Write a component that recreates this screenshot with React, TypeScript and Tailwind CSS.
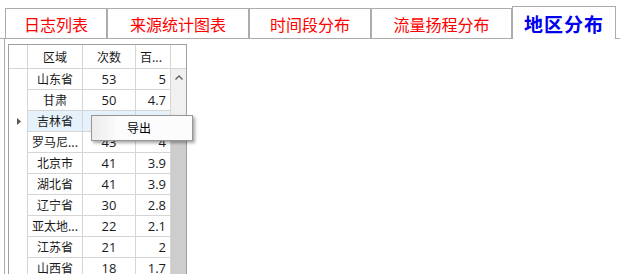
import React from "react"

const tabs = [
  { label: "日志列表", w: "w-[102px]" },
  { label: "来源统计图表", w: "w-[142px]" },
  { label: "时间段分布", w: "w-[122px]" },
  { label: "流量扬程分布", w: "w-[141px]" },
]

const rows = [
  { name: "山东省", count: "53", pct: "5" },
  { name: "甘肃", count: "50", pct: "4.7" },
  { name: "吉林省", count: "47", pct: "4.4", current: true },
  { name: "罗马尼...", count: "43", pct: "4" },
  { name: "北京市", count: "41", pct: "3.9" },
  { name: "湖北省", count: "41", pct: "3.9" },
  { name: "辽宁省", count: "30", pct: "2.8" },
  { name: "亚太地...", count: "22", pct: "2.1" },
  { name: "江苏省", count: "21", pct: "2" },
  { name: "山西省", count: "18", pct: "1.7" },
  { name: "河北省", count: "17", pct: "1.6" },
]

export default function App() {
  return (
    <div className="relative h-[274px] w-[620px] overflow-hidden bg-white font-['Noto_Sans_CJK_SC',sans-serif] text-[#1a1a1a]">
      {/* tab strip */}
      <div className="flex h-[39px] items-end border-b border-[#acacac] pl-[5px]">
        {tabs.map((t) => (
          <div
            key={t.label}
            className={`flex h-[30px] items-center justify-center border border-b-0 border-[#acacac] pt-[1px] text-[16px] leading-none text-[#ff0000] ${t.w}`}
          >
            {t.label}
          </div>
        ))}
        <div className="relative -mb-px flex h-[33px] w-[104px] items-center justify-center border border-b-0 border-[#acacac] bg-white text-[19px] font-bold leading-none tracking-[1px] text-[#0000ee]">
          地区分布
        </div>
      </div>

      {/* tab page */}
      <div className="ml-[4px] h-[235px] border-l border-[#acacac] pl-[3px] pt-[5px]">
        <div className="flex h-[260px] w-[179px] flex-col border border-[#a0a0a0]">
          <div className="flex h-[24px] shrink-0 border-b border-[#d5d5d5] text-[12px] leading-none">
            <div className="w-[19px] border-r border-[#d5d5d5]" />
            <div className="flex w-[55px] items-center justify-center border-r border-[#d5d5d5]">区域</div>
            <div className="flex w-[53px] items-center justify-center border-r border-[#d5d5d5]">次数</div>
            <div className="flex w-[35px] items-center border-r border-[#d5d5d5] pl-[4px]">百...</div>
            <div className="flex-1" />
          </div>
          <div className="flex flex-1">
            <div className="w-[162px]">
              {rows.map((r) => (
                <div key={r.name} className="flex h-[21px]">
                  <div className="flex w-[19px] items-center border-r border-[#d5d5d5] pl-[8px]">
                    {r.current && (
                      <svg width="4" height="7" viewBox="0 0 4 7">
                        <polygon points="0,0 4,3.5 0,7" fill="#555" />
                      </svg>
                    )}
                  </div>
                  <div
                    className={`flex w-[55px] items-center justify-center border-r border-b border-[#d5d5d5] text-[12px] leading-none ${r.current ? "bg-[#e5f1fb]" : ""}`}
                  >
                    {r.name}
                  </div>
                  <div
                    className={`flex w-[53px] items-center justify-center border-r border-b border-[#d5d5d5] font-['Open_Sans',sans-serif] text-[13px] leading-none ${r.current ? "bg-[#e5f1fb]" : ""}`}
                  >
                    {r.count}
                  </div>
                  <div
                    className={`flex w-[35px] items-center justify-end border-r border-b border-[#d5d5d5] pr-[4px] font-['Open_Sans',sans-serif] text-[13px] leading-none ${r.current ? "bg-[#e5f1fb]" : ""}`}
                  >
                    {r.pct}
                  </div>
                </div>
              ))}
            </div>
            {/* vertical scrollbar */}
            <div className="flex w-[15px] flex-col bg-[#f0f0f0]">
              <div className="flex h-[17px] items-center justify-center">
                <svg width="8" height="5" viewBox="0 0 8 5">
                  <polyline points="0.5,4.5 4,1 7.5,4.5" fill="none" stroke="#606060" strokeWidth="1.4" />
                </svg>
              </div>
              <div className="h-[55px]" />
              <div className="flex-1 bg-[#cdcdcd]" />
            </div>
          </div>
        </div>
      </div>

      {/* context menu */}
      <div className="absolute left-[91px] top-[115px] flex h-[26px] w-[102px] border border-[#979797] bg-[#fcfcfc] shadow-[2px_2px_3px_rgba(0,0,0,0.35)]">
        <div className="w-[24px] bg-gradient-to-r from-[#ececec] to-[#fafafa]" />
        <div className="flex items-center pl-[11px] text-[12px] leading-none text-black">导出</div>
      </div>
    </div>
  )
}
